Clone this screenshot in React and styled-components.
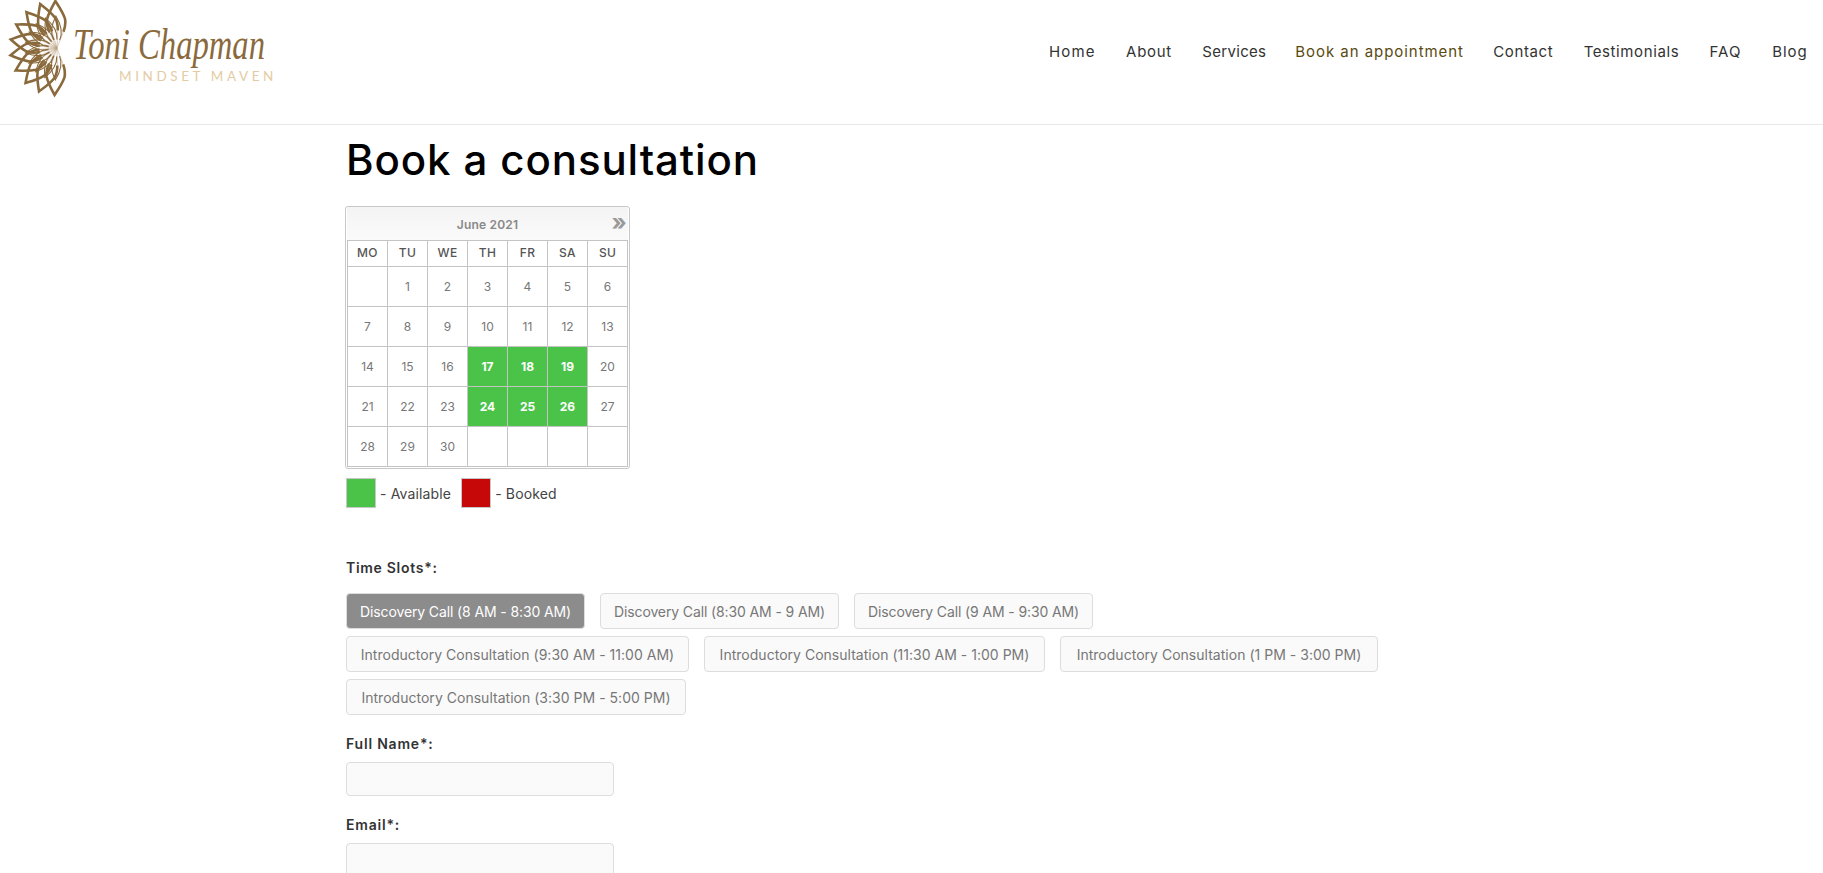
import React from "react";
import styled, { createGlobalStyle } from "styled-components";

const Global = createGlobalStyle`
  html, body { margin: 0; padding: 0; background: #fff; overflow: hidden; height: 873px; }
  body { font-family: Inter, "Open Sans", "Liberation Sans", sans-serif; color: #333; }
  * { box-sizing: border-box; }
`;

const Header = styled.header`
  height: 125px;
  border-bottom: 1px solid #e8e8e8;
  display: flex;
  justify-content: space-between;
  align-items: flex-start;
`;
const LogoLink = styled.a`
  display: block;
  width: 330px;
  height: 100px;
`;
const Nav = styled.nav`
  display: flex;
  gap: 30px;
  padding: 42px 15px 0 0;
`;
const NavLink = styled.a`
  width: ${(p) => p.$w}px;
  text-align: center;
  white-space: nowrap;
  font-size: 15px;
  line-height: 20px;
  letter-spacing: ${(p) => p.$ls}px;
  color: ${(p) => (p.$active ? "#5a4a12" : "#333")};
`;
const Main = styled.main`
  padding: 0 0 0 346px;
`;
const Title = styled.h1`
  margin: 13px 0 24px 0;
  font-size: 42px;
  line-height: 44px;
  font-weight: 500;
  color: #000;
  letter-spacing: 0.9px;
`;
const Calendar = styled.div`
  width: 285px;
  height: 263px;
  margin-left: -1px;
  border: 1px solid #c8c8c8;
  border-radius: 3px;
  padding: 0 1px;
`;
const CalHead = styled.div`
  position: relative;
  height: 33px;
  background: linear-gradient(#f4f4f4, #fafafa);
  text-align: center;
  font-size: 12px;
  line-height: 36px;
  font-weight: 600;
  color: #888;
  letter-spacing: 0.2px;
`;
const NextArrow = styled.span`
  position: absolute;
  right: 1px;
  top: -2px;
  font-size: 23px;
  line-height: 34px;
  font-weight: 700;
  color: #999;
`;
const Table = styled.table`
  border-collapse: collapse;
  table-layout: fixed;
  width: 281px;
`;
const Th = styled.th`
  width: 40px;
  height: 26px;
  padding: 0 0 2px;
  border: 1px solid #c4c4c4;
  font-size: 12px;
  font-weight: 500;
  color: #555;
  letter-spacing: 0.3px;
`;
const Td = styled.td`
  height: 40px;
  padding: 0;
  border: 1px solid #c4c4c4;
  text-align: center;
  font-size: 12px;
  font-weight: ${(p) => (p.$open ? 700 : 400)};
  color: ${(p) => (p.$open ? "#fff" : "#777")};
  background: ${(p) => (p.$open ? "#4bc348" : "#fff")};
`;
const Legend = styled.div`
  display: flex;
  align-items: center;
  margin-top: 9px;
  height: 30px;
  font-size: 14px;
  color: #444;
  letter-spacing: 0.15px;
`;
const Swatch = styled.span`
  width: 30px;
  height: 30px;
  border: 1px solid #c8c8c8;
  background: ${(p) => p.$color};
  margin-right: 4px;
`;
const LegendText = styled.span`
  margin-right: 10px;
`;
const SlotLabel = styled.label`
  display: block;
  margin-top: 50px;
  height: 20px;
  font-size: 14px;
  line-height: 20px;
  font-weight: 600;
  color: #333;
  letter-spacing: 0.7px;
`;
const Slots = styled.div`
  display: flex;
  flex-wrap: wrap;
  gap: 7px 15px;
  margin-top: 15px;
  width: 1050px;
`;
const Slot = styled.button`
  height: 36px;
  width: ${(p) => p.$w}px;
  padding: 0;
  border: 1px solid #ddd;
  border-radius: 4px;
  font: inherit;
  font-size: 14px;
  letter-spacing: ${(p) => p.$ls}px;
  white-space: nowrap;
  color: ${(p) => (p.$active ? "#fff" : "#777")};
  background: ${(p) => (p.$active ? "#8c8c8c" : "#fafafa")};
`;
const FieldLabel = styled.label`
  display: block;
  height: 20px;
  margin-top: 19px;
  font-size: 14px;
  line-height: 20px;
  font-weight: 600;
  color: #333;
  letter-spacing: 0.8px;
`;
const Input = styled.input`
  display: block;
  width: 268px;
  height: 34px;
  margin-top: 8px;
  border: 1px solid #ddd;
  border-radius: 4px;
  background: #fafafa;
`;

const weeks = [
  ["", 1, 2, 3, 4, 5, 6],
  [7, 8, 9, 10, 11, 12, 13],
  [14, 15, 16, 17, 18, 19, 20],
  [21, 22, 23, 24, 25, 26, 27],
  [28, 29, 30, "", "", "", ""],
];
const open = new Set([17, 18, 19, 24, 25, 26]);
const slots = [
  ["Discovery Call (8 AM - 8:30 AM)", 239, -0.12, true],
  ["Discovery Call (8:30 AM - 9 AM)", 239, -0.12],
  ["Discovery Call (9 AM - 9:30 AM)", 239, -0.12],
  ["Introductory Consultation (9:30 AM - 11:00 AM)", 343, 0.02],
  ["Introductory Consultation (11:30 AM - 1:00 PM)", 341, 0.02],
  ["Introductory Consultation (1 PM - 3:00 PM)", 318, 0.02],
  ["Introductory Consultation (3:30 PM - 5:00 PM)", 340, 0.02],
];
const nav = [
  ["Home", 46.7, 1.2],
  ["About", 46.7, 0.7],
  ["Services", 63, 0.3],
  ["Book an appointment", 167.6, 0.95],
  ["Contact", 60.7, 0.65],
  ["Testimonials", 95.6, 0.6],
  ["FAQ", 32.8, 1.2],
  ["Blog", 36, 0.95],
];

function Logo() {
  const angles = [-87, -67.5, -48, -28.5, -9, 10.5, 30, 49.5, 69, 88];
  return (
    <svg width="330" height="100" viewBox="0 0 330 100">
      <g transform="translate(57 48)" fill="none" stroke="#8a6a3c">
        {angles.map((a) => (
          <g key={a} transform={`rotate(${180 + a})`}>
            <path d="M0 0 C6 -2.5 11 -5 16 -7 M0 0 C6 2.5 11 5 16 7" strokeWidth="0.5" stroke="#b8a180" />
            <path d="M8 -3 C14 -6 22 -5.5 32 0 C22 5.5 14 6 8 3" strokeWidth="1.1" />
            <path d="M16 -7 C22 -9.5 26 -9.5 29 -9 C36 -7 42 -3 47 0 C42 3 36 7 29 9 C26 9.5 22 9.5 16 7" strokeWidth="2.6" strokeLinejoin="miter" />
          </g>
        ))}
      </g>
      <text x="73" y="59" fontFamily="Liberation Serif, serif" fontStyle="italic" fontSize="44" fill="#8a6a3c" textLength="192" lengthAdjust="spacingAndGlyphs">Toni Chapman</text>
      <text x="119" y="81" fontFamily="Lato, sans-serif" fontSize="13.5" fill="#e4cba3" letterSpacing="3.6">MINDSET MAVEN</text>
    </svg>
  );
}

export default function App() {
  return (
    <>
      <Global />
      <Header>
        <LogoLink><Logo /></LogoLink>
        <Nav>
          {nav.map(([n, w, ls]) => (
            <NavLink key={n} $w={w} $ls={ls} $active={n === "Book an appointment"}>{n}</NavLink>
          ))}
        </Nav>
      </Header>
      <Main>
        <Title>Book a consultation</Title>
        <Calendar>
          <CalHead>June 2021<NextArrow>»</NextArrow></CalHead>
          <Table>
            <thead>
              <tr>{["MO", "TU", "WE", "TH", "FR", "SA", "SU"].map((d) => <Th key={d}>{d}</Th>)}</tr>
            </thead>
            <tbody>
              {weeks.map((w, i) => (
                <tr key={i}>
                  {w.map((d, j) => <Td key={j} $open={open.has(d)}>{d}</Td>)}
                </tr>
              ))}
            </tbody>
          </Table>
        </Calendar>
        <Legend>
          <Swatch $color="#4bc348" /><LegendText>- Available</LegendText>
          <Swatch $color="#c60808" /><LegendText>- Booked</LegendText>
        </Legend>
        <SlotLabel>Time Slots*:</SlotLabel>
        <Slots>
          {slots.map(([t, w, ls, a]) => <Slot key={t} $w={w} $ls={ls} $active={a}>{t}</Slot>)}
        </Slots>
        <FieldLabel>Full Name*:</FieldLabel>
        <Input />
        <FieldLabel>Email*:</FieldLabel>
        <Input />
      </Main>
    </>
  );
}
